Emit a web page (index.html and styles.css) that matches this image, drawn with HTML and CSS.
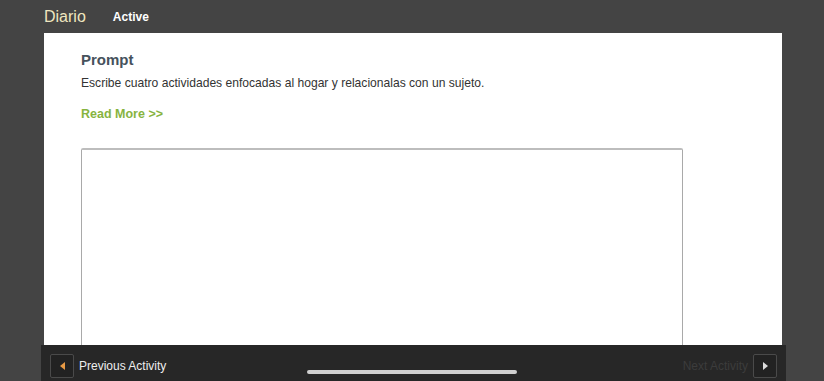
FILE: index.html
```html
<!DOCTYPE html>
<html lang="es">
<head>
    <meta charset="UTF-8">
    <meta name="viewport" content="width=device-width, initial-scale=1.0">
    <title>Diario</title>
    <link rel="stylesheet" href="styles.css">
</head>
<body>

<header class="top-bar">
    <span class="title">Diario</span>
    <span class="status">Active</span>
</header>

<!-- Activity content -->
<main class="panel">
    <h2>Prompt</h2>
    <p class="prompt-text">Escribe cuatro actividades enfocadas al hogar y relacionalas con un sujeto.</p>
    <a class="read-more" href="#">Read More &gt;&gt;</a>
    <textarea class="answer"></textarea>
</main>

<!-- Bottom navigation -->
<nav class="bottom-bar">
    <div class="nav-item">
        <span class="nav-btn"><span class="arrow-left"></span></span>
        <span class="nav-label">Previous Activity</span>
    </div>
    <div class="nav-item">
        <span class="nav-label dim">Next Activity</span>
        <span class="nav-btn"><span class="arrow-right"></span></span>
    </div>
</nav>
<div class="home-indicator"></div>

</body>
</html>
```

FILE: styles.css
```css
/* Styles for the journal page */
html, body {
    height: 381px;
    overflow: hidden;
}
body {
    font-family: "Liberation Sans", Arial, sans-serif;
    margin: 0;
    padding: 0;
    background-color: #444;
}
.top-bar {
    height: 33px;
    display: flex;
    align-items: center;
    padding-left: 44px;
    box-sizing: border-box;
}
.title {
    color: #efe6bf;
    font-size: 16px;
    margin-right: 27px;
}
.status {
    color: #fff;
    font-size: 12px;
    font-weight: bold;
    margin-top: 1px;
}
.panel {
    background-color: #fff;
    margin: 0 42px 0 44px;
    padding: 18px 37px 0;
    height: 330px;
    overflow: hidden;
}
.panel h2 {
    font-size: 15px;
    color: #46525c;
    margin: 0 0 8px;
}
.prompt-text {
    font-size: 12.1px;
    color: #333;
    margin: 0 0 17px;
}
.read-more {
    display: block;
    font-size: 12.5px;
    font-weight: bold;
    color: #87b43f;
    text-decoration: none;
}
.answer {
    display: block;
    width: 602px;
    height: 260px;
    margin-top: 27px;
    box-sizing: border-box;
    border: 1px solid #a9a9a9;
    border-top: 2px solid #bdbdbd;
    border-radius: 2px;
    resize: none;
}
.bottom-bar {
    position: fixed;
    left: 41px;
    right: 38px;
    bottom: 0;
    height: 36px;
    background-color: #272727;
    display: flex;
    justify-content: space-between;
    align-items: center;
    padding: 0 9px;
}
.nav-item {
    display: flex;
    align-items: center;
    gap: 5px;
    margin-top: 6px;
}
.nav-btn {
    width: 22px;
    height: 22px;
    border: 1px solid #4a4a4a;
    border-radius: 2px;
    display: flex;
    align-items: center;
    justify-content: center;
    background-color: #222;
}
.arrow-left {
    width: 0;
    height: 0;
    border-top: 4px solid transparent;
    border-bottom: 4px solid transparent;
    border-right: 5px solid #e89a45;
}
.arrow-right {
    width: 0;
    height: 0;
    border-top: 4px solid transparent;
    border-bottom: 4px solid transparent;
    border-left: 5px solid #ddd;
}
.nav-label {
    color: #eee;
    font-size: 12px;
}
.nav-label.dim {
    color: #3c3c3c;
}
.home-indicator {
    position: fixed;
    left: 307px;
    bottom: 7px;
    width: 210px;
    height: 4px;
    border-radius: 2px;
    background-color: #d0d0d0;
}
```
